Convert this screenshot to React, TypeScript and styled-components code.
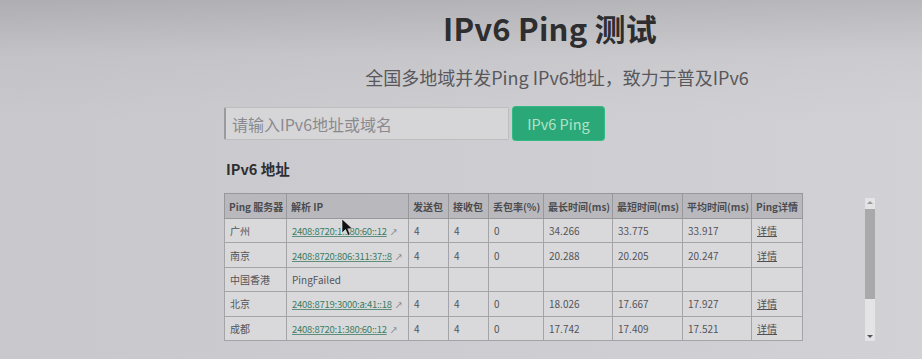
import styled, { createGlobalStyle } from "styled-components";

const GlobalStyle = createGlobalStyle`
    html, body {
        margin: 0;
        padding: 0;
    }
    body {
        width: 922px;
        height: 359px;
        overflow: hidden;
        font-family: "Noto Sans CJK SC", "Noto Sans", sans-serif;
        background: linear-gradient(180deg, #b4b4b8 0px, #c9c9cd 55px, #cfced3 120px),
            #cfced3;
    }
`;

const Page = styled.div`
    position: relative;
    width: 922px;
    height: 359px;
    background: linear-gradient(90deg, rgba(0,0,0,0.03) 0%, rgba(255,255,255,0.06) 100%);
`;

const Main = styled.div`
    width: 660px;
    padding-left: 224px;
    display: flex;
    flex-direction: column;
`;

const Title = styled.h1`
    margin: 8px 0 0;
    text-align: center;
    font-size: 31px;
    font-weight: 700;
    line-height: 40px;
    color: #2e2e30;
    letter-spacing: 0.2px;
    padding-right: 8px;
`;

const Subtitle = styled.p`
    margin: 17px 0 0;
    text-align: center;
    padding-left: 6px;
    font-size: 18px;
    line-height: 24px;
    color: #58585c;
`;

const SearchRow = styled.div`
    display: flex;
    gap: 4px;
    margin-top: 18px;
`;

const Input = styled.div`
    width: 276px;
    height: 31px;
    border: 1px solid #bdbdc0;
    border-radius: 2px;
    background: #d6d6d9;
    display: flex;
    align-items: center;
    padding-left: 6px;
    font-size: 16px;
    color: #8a8a8e;
    border-left: 2px solid #9a9a9e;
`;

const PingButton = styled.div`
    width: 91px;
    height: 33px;
    border-radius: 3px;
    background: #2ba878;
    box-shadow: 0 0 0 1px #35b984;
    color: #b3e2c8;
    font-size: 14.5px;
    display: flex;
    align-items: center;
    justify-content: center;
`;

const Section = styled.h2`
    margin: 19px 0 0 2px;
    font-size: 14.5px;
    font-weight: 700;
    color: #2e2e30;
    line-height: 20px;
`;

const Table = styled.table`
    margin-top: 14px;
    border-collapse: collapse;
    table-layout: fixed;
    width: 578px;
    font-size: 10px;
    color: #545458;
    background: #d9d9dc;
    border: 1px solid #909094;
`;

const Th = styled.th<{ $w: number }>`
    width: ${(p) => p.$w}px;
    height: 25px;
    padding: 0 0 0 4px;
    text-align: left;
    font-weight: 700;
    color: #4c4c50;
    background: #b9b9bd;
    border: 1px solid #98989c;
    box-sizing: border-box;
    white-space: nowrap;
    overflow: hidden;
`;

const Td = styled.td`
    height: 23.4px;
    padding: 0 0 0 5px;
    border: 1px solid #a4a4a8;
    white-space: nowrap;
    overflow: hidden;
`;

const IpLink = styled.span`
    font-size: 9.5px;
    letter-spacing: -0.25px;
    color: #3a7d62;
    text-decoration: underline;
    text-decoration-color: #5f8f7c;
`;

const Arrow = styled.span`
    margin-left: 3px;
    font-size: 8px;
    color: #777;
`;

const Detail = styled.span`
    color: #505054;
    text-decoration: underline;
`;

const Scrollbar = styled.div`
    position: absolute;
    left: 865px;
    top: 198px;
    width: 10px;
    height: 143px;
    background: #e4e4e6;
    display: flex;
    flex-direction: column;
    align-items: center;
`;

const ScrollArrow = styled.div<{ $down?: boolean }>`
    width: 0;
    height: 0;
    margin: 3px 0;
    border-left: 3px solid transparent;
    border-right: 3px solid transparent;
    ${(p) => (p.$down ? "border-top: 3px solid #555;" : "border-bottom: 3px solid #999;")}
`;

const Thumb = styled.div`
    width: 10px;
    height: 90px;
    background: #a9a9ab;
    margin-top: 2px;
`;

const Spacer = styled.div`
    flex: 1;
`;

const Cursor = styled.svg`
    position: absolute;
    left: 341px;
    top: 218px;
`;

type Row = {
    city: string;
    ip?: string;
    failed?: boolean;
    sent?: string;
    recv?: string;
    loss?: string;
    max?: string;
    min?: string;
    avg?: string;
};

const rows: Row[] = [
    { city: "广州", ip: "2408:8720:1:380:60::12", sent: "4", recv: "4", loss: "0", max: "34.266", min: "33.775", avg: "33.917" },
    { city: "南京", ip: "2408:8720:806:311:37::8", sent: "4", recv: "4", loss: "0", max: "20.288", min: "20.205", avg: "20.247" },
    { city: "中国香港", failed: true },
    { city: "北京", ip: "2408:8719:3000:a:41::18", sent: "4", recv: "4", loss: "0", max: "18.026", min: "17.667", avg: "17.927" },
    { city: "成都", ip: "2408:8720:1:380:60::12", sent: "4", recv: "4", loss: "0", max: "17.742", min: "17.409", avg: "17.521" },
];

const columns = [
    { label: "Ping 服务器", w: 62 },
    { label: "解析 IP", w: 122 },
    { label: "发送包", w: 40 },
    { label: "接收包", w: 40 },
    { label: "丢包率(%)", w: 55 },
    { label: "最长时间(ms)", w: 69 },
    { label: "最短时间(ms)", w: 70 },
    { label: "平均时间(ms)", w: 69 },
    { label: "Ping详情", w: 51 },
];

export default function App() {
    return (
        <Page>
            <GlobalStyle />
            <Main>
                <Title>IPv6 Ping 测试</Title>
                <Subtitle>全国多地域并发Ping IPv6地址，致力于普及IPv6</Subtitle>
                <SearchRow>
                    <Input>请输入IPv6地址或域名</Input>
                    <PingButton>IPv6 Ping</PingButton>
                </SearchRow>
                <Section>IPv6 地址</Section>
                <Table>
                    <thead>
                        <tr>
                            {columns.map((c) => (
                                <Th key={c.label} $w={c.w}>{c.label}</Th>
                            ))}
                        </tr>
                    </thead>
                    <tbody>
                        {rows.map((r) => (
                            <tr key={r.city}>
                                <Td>{r.city}</Td>
                                <Td>
                                    {r.failed ? (
                                        "PingFailed"
                                    ) : (
                                        <>
                                            <IpLink>{r.ip}</IpLink>
                                            <Arrow>↗</Arrow>
                                        </>
                                    )}
                                </Td>
                                <Td>{r.sent}</Td>
                                <Td>{r.recv}</Td>
                                <Td>{r.loss}</Td>
                                <Td>{r.max}</Td>
                                <Td>{r.min}</Td>
                                <Td>{r.avg}</Td>
                                <Td>{r.failed ? "" : <Detail>详情</Detail>}</Td>
                            </tr>
                        ))}
                    </tbody>
                </Table>
            </Main>
            <Scrollbar>
                <ScrollArrow />
                <Thumb />
                <Spacer />
                <ScrollArrow $down />
            </Scrollbar>
            <Cursor width="14" height="20" viewBox="0 0 14 20">
                <path d="M1 1 L1 15 L4.5 11.5 L7 17.5 L9.2 16.6 L6.8 10.8 L11.5 10.8 Z" fill="#111" stroke="#eee" strokeWidth="0.6" />
            </Cursor>
        </Page>
    );
}
